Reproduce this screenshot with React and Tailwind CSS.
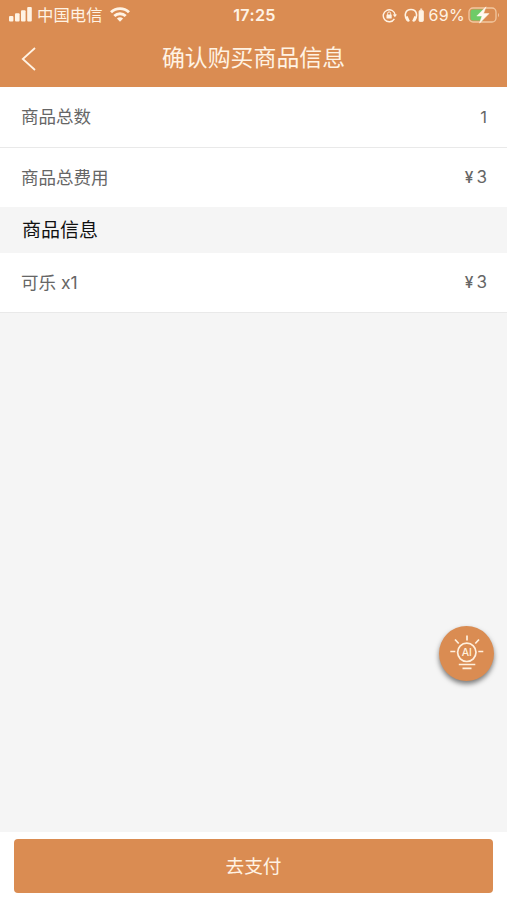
function StatusBar() {
  return (
    <div className="grid h-[30px] grid-cols-[1fr_auto_1fr] items-center pl-[9px] pr-[7px] text-[#fff3e4]">
      <div className="flex items-center">
        <svg className="mb-px h-[15px] w-6" viewBox="0 0 24 15" fill="currentColor">
          <rect x="0" y="9" width="4.400" height="5.500" rx="1" />
          <rect x="6" y="6.200" width="4.600" height="8.300" rx="1" />
          <rect x="12" y="3.200" width="4.600" height="11.300" rx="1" />
          <rect x="18.200" y="0" width="4.600" height="14.500" rx="1" />
        </svg>
        <span className="ml-1 text-[16.400px] leading-none">中国电信</span>
        <svg className="mb-px ml-[7px] h-[15px] w-5" viewBox="0 0 20 15" fill="none" stroke="currentColor" strokeWidth="2.900">
          <path d="M1 5.300C6.100.4 13.900.4 19 5.300" />
          <path d="M4.300 9C7.500 5.900 12.500 5.900 15.700 9" />
          <path d="M6.900 11.600Q10 8.900 13.100 11.600L10 14.700Z" fill="currentColor" stroke="none" />
        </svg>
      </div>
      <span className="text-[16.200px] font-semibold leading-none tracking-[0.300px]">17:25</span>
      <div className="flex items-center justify-end">
        <svg className="h-[15px] w-[15px]" viewBox="0 0 15 15" fill="none" stroke="currentColor" strokeWidth="1.400">
          <path d="M12.400 10.800A6 6 0 1 1 13.200 7" />
          <path d="M10.800 6.500H15L12.900 9.200Z" fill="currentColor" stroke="none" />
          <rect x="4.500" y="6.500" width="5.200" height="4" rx=".5" fill="currentColor" stroke="none" />
          <path d="M5.600 6.800V5.400a1.500 1.500 0 0 1 3 0v1.400" strokeWidth="1" />
        </svg>
        <svg className="ml-[7px] h-[15px] w-[21px]" viewBox="0 0 21 15" fill="none" stroke="currentColor">
          <path d="M3.200 12.500C-.3 7.500 1.200 1.500 7 1.500S14 7.500 10.800 12.500" strokeWidth="1.600" />
          <path d="M2.500 8.500l2.300 5M11.500 8.500l-2.300 5" strokeWidth="2.300" />
          <rect x="15" y="2.500" width="4.400" height="11" rx="1" fill="currentColor" strokeWidth=".8" />
          <path d="M16.200 1.200h2" strokeWidth="1.200" />
        </svg>
        <span className="ml-[4px] text-[16px] leading-none tracking-[0.300px]">69%</span>
        <svg className="ml-[3px] h-[18px] w-8" viewBox="0 0 32 18" fill="none">
          <rect x="1" y="2" width="27" height="14" rx="4" stroke="#f2c7a0" strokeWidth="1.300" />
          <path d="M5 3.500H15V14.500H5A2.500 2.500 0 0 1 2.500 12V6A2.500 2.500 0 0 1 5 3.500Z" fill="#6fcb68" />
          <path d="M30 6.700Q32 9 30 11.300Z" fill="#f2c7a0" />
          <path d="M18 .8L8.800 10H14L11.500 17.200L21 7.600H15.500Z" fill="#fffaf2" stroke="#fffaf2" strokeWidth=".5" />
        </svg>
      </div>
    </div>
  )
}

function Row({ label, value, className }) {
  return (
    <div className={`flex items-center justify-between bg-white pl-[21px] pr-5 text-[17.500px] leading-none text-[#666] ${className}`}>
      <span>{label}</span>
      <span className="text-[16.500px]">{value}</span>
    </div>
  )
}

function Price({ amount }) {
  return (
    <span className="flex items-center gap-[3px]">
      <span className="text-[15.500px] font-medium">¥</span>
      <span className="text-[17px]">{amount}</span>
    </span>
  )
}

function AssistantButton() {
  return (
    <button aria-label="AI" className="absolute left-[439px] top-[626px] flex h-[55px] w-[55px] items-center justify-center rounded-full bg-[#da8c52] shadow-[0_3px_5px_rgba(0,0,0,0.500)]">
      <svg className="h-[55px] w-[55px]" viewBox="0 0 55 55" fill="none" stroke="#fff0dd" strokeWidth="1.700">
        <circle cx="27.800" cy="26.300" r="9.200" />
        <path d="M28 9.500v5M16 13.500l3.700 4M40 13.500l-3.700 4M11.300 25.500h5M39.300 25.500h5M19.800 38.500h16.500M23.500 42.300h9" />
        <text x="27.800" y="30" textAnchor="middle" fontSize="10.500" fontFamily="Inter, sans-serif" fontWeight="500" fill="#fff0dd" stroke="none">AI</text>
      </svg>
    </button>
  )
}

export default function App() {
  return (
    <div className="relative flex h-[900px] w-full flex-col overflow-hidden bg-[#f5f5f5] font-[Inter,'Noto_Sans_CJK_SC',sans-serif]">
      <header className="h-[87px] shrink-0 bg-[#da8c52]">
        <StatusBar />
        <div className="grid h-[57px] grid-cols-[60px_1fr_60px] items-center text-[#fff3e4]">
          <svg className="ml-[21px] h-6 w-4" viewBox="0 0 16 24" fill="none" stroke="currentColor" strokeWidth="1.800">
            <path d="M14 1L1.800 12L14 23" />
          </svg>
          <h1 className="text-center text-[22.900px] leading-none">确认购买商品信息</h1>
        </div>
      </header>
      <main className="flex-1">
        <Row label="商品总数" value="1" className="h-[61px] border-b border-[#e9e9e9]" />
        <Row label="商品总费用" value={<Price amount="3" />} className="h-[59px]" />
        <h2 className="flex h-[46px] items-center pl-[22px] pt-px text-[19px] leading-none text-[#111]">商品信息</h2>
        <Row label="可乐 x1" value={<Price amount="3" />} className="h-[60px] border-b border-[#e9e9e9]" />
      </main>
      <footer className="h-[68px] bg-white px-[14px] pt-[7px]">
        <button className="flex h-[54px] w-full items-center justify-center rounded-[4px] bg-[#da8c52] pt-[2px] text-[18.700px] leading-none text-[#fff3e4]">去支付</button>
      </footer>
      <AssistantButton />
    </div>
  )
}
